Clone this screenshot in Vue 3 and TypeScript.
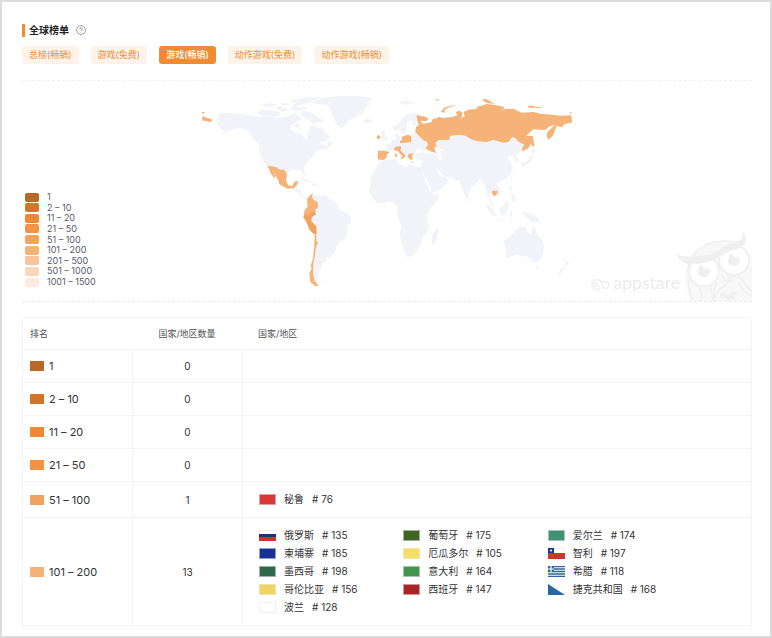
<script setup lang="ts">
import { ref } from 'vue'

interface Country {
  name: string
  rank: number
  color?: string
  flag?: 'ru' | 'cl' | 'gr' | 'cz'
}
interface Band {
  label: string
  color: string
  countries: Country[]
}

const tabs: string[] = ['总榜(畅销)', '游戏(免费)', '游戏(畅销)', '动作游戏(免费)', '动作游戏(畅销)']
const active = ref<number>(2)

const legend: { label: string; color: string }[] = [
  { label: '1', color: '#b96825' },
  { label: '2 – 10', color: '#d37429' },
  { label: '11 – 20', color: '#f08731' },
  { label: '21 – 50', color: '#f39243' },
  { label: '51 – 100', color: '#f2a35d' },
  { label: '101 – 200', color: '#f5b377' },
  { label: '201 – 500', color: '#f7c598' },
  { label: '501 – 1000', color: '#f9d7ba' },
  { label: '1001 – 1500', color: '#fcebde' },
]

const listed: Country[][] = [
  [],
  [],
  [],
  [],
  [{ name: '秘鲁', rank: 76, color: '#d93836' }],
  [
    { name: '俄罗斯', rank: 135, flag: 'ru' },
    { name: '葡萄牙', rank: 175, color: '#3d6524' },
    { name: '爱尔兰', rank: 174, color: '#429172' },
    { name: '柬埔寨', rank: 185, color: '#182f94' },
    { name: '厄瓜多尔', rank: 105, color: '#f5df68' },
    { name: '智利', rank: 197, flag: 'cl' },
    { name: '墨西哥', rank: 198, color: '#2c6849' },
    { name: '意大利', rank: 164, color: '#43944f' },
    { name: '希腊', rank: 118, flag: 'gr' },
    { name: '哥伦比亚', rank: 156, color: '#efd468' },
    { name: '西班牙', rank: 147, color: '#aa2427' },
    { name: '捷克共和国', rank: 168, flag: 'cz' },
    { name: '波兰', rank: 128, color: '#ffffff' },
  ],
]

const bands: Band[] = listed.map((countries, i) => ({ ...legend[i], countries }))
</script>

<template>
  <main class="page">
    <header class="heading">
      <h1>全球榜单</h1>
      <svg class="help" viewBox="0 0 20 20" role="img" aria-label="说明">
        <circle cx="10" cy="10" r="8.8" />
        <path d="M7.2 8.2C7.2 6.5 8.4 5.4 10 5.4s2.8 1 2.8 2.5c0 1.900-2.800 2.100-2.800 4.200M10 13.600v1.500" />
      </svg>
    </header>

    <nav class="tabs">
      <button
        v-for="(tab, i) in tabs"
        :key="tab"
        type="button"
        :class="['tab', { on: i === active }]"
        @click="active = i"
      >{{ tab }}</button>
    </nav>

    <section class="world">
      <svg class="map" viewBox="0 0 1152 600" aria-hidden="true">
        <g class="land">
          <path d="M66 74L80 70 100 68 112 71 130 71 165 76 190 80 215 79 250 84 275 80 290 74 300 66 308 76 320 86 305 96 290 105 287 118 300 128 318 133 326 142 334 150 338 140 336 128 345 118 344 106 362 108 372 116 380 110 388 124 400 132 405 142 395 152 378 156 366 166 382 160 384 168 400 164 410 168 392 178 376 178 362 186 358 196 345 206 340 214 328 228 326 236 331 258 326 260 320 244 312 240 296 240 282 244 275 254 268 244 258 236 247 232 232 230 218 226 206 216 196 200 194 175 190 160 175 146 168 134 150 118 130 114 112 118 100 124 75 136 92 124 80 120 74 110 64 104 72 94 60 90 74 84Z" />
          <path d="M188 66L200 58 222 62 250 62 256 74 240 80 212 78 194 76ZM200 46L225 38 242 42 232 50 210 52ZM243 52L256 48 264 56 276 54 278 62 258 66ZM282 34L310 26 345 20 382 22 362 30 340 38 318 44 300 50 290 46 304 38ZM280 54L300 50 330 52 336 58 306 62ZM320 62L340 64 362 78 380 88 384 100 368 96 352 104 346 92 330 84 318 76ZM296 104L310 100 314 110 302 114ZM256 40L274 38 278 44 262 46ZM358 152L374 152 368 156ZM398 152L412 158 408 168 394 160Z" />
          <path d="M348 38L382 24 430 18 480 17 534 24 520 34 524 44 508 56 510 66 494 76 476 84 458 94 446 110 438 113 424 102 418 88 410 74 408 58 396 46 372 42ZM504 92L514 88 530 89 534 94 520 99 508 97Z" />
          <path d="M296 292L306 296 318 298 321 316 330 322 340 320 334 329 322 324 314 313 298 302ZM312 266L328 265 348 276 338 277 322 269ZM350 280L366 282 364 287 350 285ZM371 285L376 285 376 288 371 288ZM96 278L100 280 98 283Z" />
          <path d="M352 312L362 316 380 318 392 316 402 326 418 336 428 346 430 358 448 366 466 378 469 392 458 408 456 430 450 446 432 458 424 466 424 480 412 494 404 504 390 502 398 512 382 520 378 536 368 544 374 552 366 562 370 586 354 572 352 520 360 430 330 380 340 330ZM388 573L398 571 396 576Z" />
        </g>
        <g class="paid">
          <path d="M22 78L36 84 48 86 52 91 44 97 32 92 22 92ZM21 66L28 66 27 71 22 71Z" />
          <path d="M216 226L228 229 246 232 250 237 262 240 266 238 272 246 276 254 273 272 280 286 292 288 298 275 308 272 309 278 304 288 298 292 296 297 288 294 279 297 266 290 252 281 251 272 238 252 229 232 240 258 239 267 227 250 222 236Z" />
          <path d="M355 309L350 318 356 330 368 336 369 353 363 356 361 370 348 378 326 374 329 360 338 350 336 328 345 316Z" />
          <path d="M359 430L364 434 364 452 369 458 363 472 360 494 355 520 354 550 359 572 371 588 360 588 346 576 343 550 350 535 347 528 354 505 358 468Z" />
        </g>
        <path class="peru" d="M327 374L340 376 347 366 360 366 362 374 350 382 349 394 364 408 365 432 356 432 344 420 334 396 325 382Z" />

        <g transform="translate(495)">
          <g class="land">
            <path d="M58 214L80 210 105 206 112 208 110 220 128 226 140 232 148 222 165 228 182 230 190 252 200 275 212 304 222 314 238 312 232 330 215 350 203 372 202 392 207 410 198 430 186 446 183 462 172 480 158 498 142 502 136 490 128 466 118 436 124 410 116 384 110 370 112 348 104 340 88 334 70 338 52 340 40 328 30 312 27 300 32 284 29 270 38 248 50 232ZM232 412L236 426 228 450 222 464 216 460 215 444 220 428Z" />
            <path d="M162 198L172 190 190 187 205 191 229 192 240 206 246 200 238 192 240 184 248 178 236 178 222 170 222 148 270 144 300 132 330 142 380 152 430 154 455 140 475 150 490 160 484 184 474 190 466 196 475 206 474 218 466 212 460 200 448 198 440 203 448 210 456 222 458 240 450 256 436 268 424 272 416 274 410 282 418 296 420 308 412 318 400 322 390 308 386 312 392 330 404 352 396 348 384 322 376 292 366 274 360 268 348 280 336 290 328 304 326 320 320 328 312 312 304 286 298 270 288 274 280 264 266 262 252 260 266 268 258 284 240 298 215 308 210 296 198 270 186 244 182 230 188 212 170 210Z" />
            <path d="M77 180L82 172 75 164 92 160 94 152 108 146 106 138 114 138 122 142 150 136 164 128 166 112 172 98 188 112 186 134 204 158 196 172 206 178 196 176 184 184 178 172 168 182 162 192 146 194 142 206 130 190 114 176 106 182 90 184ZM96 112L112 104 128 82 145 72 168 68 180 78 168 84 168 102 156 112 162 98 150 90 140 102 140 120 128 134 122 126 118 118 104 124ZM66 122L76 126 74 136 84 144 80 150 64 154 70 146 62 136ZM116 36L136 32 163 36 140 44 124 42ZM230 22L236 26 228 30ZM106 132L114 126 112 142 106 142Z" />
            <path d="M376 338L384 342 398 358 408 376 404 380 386 362ZM418 354L432 344 440 330 446 338 442 362 432 378 420 370ZM404 384L424 388 436 394 418 392ZM450 362L462 356 454 364 460 382 450 378ZM456 306L464 318 468 330 460 336 452 322ZM450 288L458 290 456 304 448 300ZM440 394L462 396 454 400ZM486 362L500 368 514 370 530 380 546 402 530 396 514 396 500 382 488 374ZM326 322L332 328 330 336 326 332ZM452 260L456 258 455 272 452 270ZM412 278L422 274 418 282ZM518 174L528 184 520 192 514 186ZM514 192L520 204 512 216 492 228 484 228 484 220 504 212ZM430 452L452 438 464 422 476 412 492 410 500 412 498 424 514 432 518 408 526 416 534 436 548 454 553 474 546 504 528 519 514 514 500 498 486 500 472 492 452 500 438 504 438 480ZM526 528L536 528 532 540ZM612 504L620 514 629 518 614 532 604 550 592 552 604 536 616 526ZM550 386L560 394 552 390ZM584 416L600 430 588 422ZM628 430L636 428 630 436ZM290 562L298 563 294 566ZM8 94L24 86 38 92 32 98 14 98Z" />
          </g>
          <path class="sea" d="M229 235L240 245 253 259 246 262 236 251ZM185 242L200 266 212 292 214 308 209 302 197 274ZM229 178L241 180 238 192 247 202 241 209 233 202ZM167 187L176 174 186 182 206 183 210 191 188 186 176 190Z" />
          <g class="paid">
            <path d="M170 75L195 80 207 87 199 93 180 92 190 102 215 96 218 87 232 84 236 80 250 84 280 80 292 76 287 67 296 62 306 66 306 80 300 88 314 78 310 66 330 58 348 58 352 50 380 42 400 44 431 50 432 56 420 60 440 57 460 56 485 68 520 66 545 72 575 74 600 77 634 76 636 98 614 102 606 112 590 108 586 118 578 138 564 150 560 138 562 126 572 116 586 104 566 110 556 120 520 118 508 128 498 137 518 138 523 165 518 172 514 160 504 176 486 184 486 176 492 164 474 154 466 144 456 142 446 156 430 158 400 150 380 156 352 154 330 146 318 138 300 134 270 138 268 150 236 150 226 158 230 168 222 174 230 190 212 184 196 176 204 164 200 154 192 152 180 140 166 126 168 112 178 104 172 94Z" />
            <path d="M242 66L252 54 270 47 292 45 270 51 256 58 253 67 266 70ZM364 29L378 27 394 36 404 41 382 40ZM502 49L520 47 528 51 543 51 542 54 506 53ZM222 29L238 28 236 32ZM630 67L635 67 635 71 630 71ZM51 138L56 134 62 140 58 147 51 147ZM53 182L74 182 90 186 82 192 79 204 70 210 53 208ZM119 153L126 150 126 140 142 134 153 138 154 156 136 158 122 160ZM101 176L108 170 122 168 124 176 120 180 134 194 136 200 128 206 119 205 128 200 112 182 104 182ZM105 191L111 191 111 200 106 200ZM143 195L152 190 163 193 154 197 159 206 152 210 144 202ZM151 214L161 216 156 218ZM396 303L402 301 406 304 412 301 412 311 404 318 397 313Z" />
          </g>
        </g>
      </svg>

      <ul class="legend">
        <li v-for="item in legend" :key="item.label">
          <i :style="{ background: item.color }"></i>{{ item.label }}
        </li>
      </ul>

      <svg class="brand" viewBox="54 27 492 216" role="img" aria-label="appstare">
        <path class="body" d="M348 150Q360 82 430 66Q485 56 520 88L546 108V243H362Q344 200 348 150Z" />
        <path class="trim" d="M352 158Q360 84 432 66Q480 58 506 72M354 176Q356 216 368 243M384 198Q398 214 394 243M420 198L432 243M454 166L470 186 488 152M440 186Q428 212 434 243M470 190L498 160 546 216M470 192L446 212 428 243M506 188Q520 220 546 226" />
        <circle class="eye" cx="402" cy="154" r="45" />
        <circle class="eye" cx="492" cy="120" r="45" />
        <path class="mark" d="M320 104Q352 114 400 108Q436 100 462 80Q486 66 508 62Q520 54 520 32Q532 54 524 72Q510 88 484 92Q460 100 436 118Q400 134 356 132Q330 130 320 104Z" />
        <path class="mark" d="M394 136Q402 154 420 146Q420 170 402 172Q384 170 384 154Q384 142 394 136ZM486 100Q492 120 510 112Q512 136 492 138Q472 136 474 118Q476 106 486 100ZM450 222L462 216 472 226 486 216 502 218 490 230 500 238 484 236 474 243 466 234 454 234Z" />
        <path class="glyph" d="M92 204A15 15 0 1 1 92 184Q98 194 98 200A10 10 0 1 0 100 188" />
        <circle class="glyph" cx="78" cy="194" r="5" />
        <text x="130" y="208">appstare</text>
      </svg>
    </section>

    <div class="sheet">
      <table>
        <thead>
          <tr>
            <th class="rank">排名</th>
            <th class="count">国家/地区数量</th>
            <th class="places">国家/地区</th>
          </tr>
        </thead>
        <tbody>
          <tr v-for="band in bands" :key="band.label">
            <td>
              <span class="band"><i :style="{ background: band.color }"></i>{{ band.label }}</span>
            </td>
            <td class="num">{{ band.countries.length }}</td>
            <td class="list">
              <ul v-if="band.countries.length" class="countries">
                <li v-for="c in band.countries" :key="c.name">
                  <svg class="flag" viewBox="0 0 17 11" aria-hidden="true">
                    <rect width="17" height="11" :fill="c.color ?? '#ffffff'" />
                    <rect v-if="c.flag !== 'cz' && c.flag !== 'gr'" class="edge" x=".5" y=".5" width="16" height="10" />
                    <template v-if="c.flag === 'ru'">
                      <path fill="#232c86" d="M0 4h17v3H0z" />
                      <path fill="#d5322e" d="M0 7h17v4H0z" />
                    </template>
                    <template v-else-if="c.flag === 'cl'">
                      <path fill="#c63a2b" d="M0 5h17v6H0z" />
                      <path fill="#1a3798" d="M0 0h6v5H0z" />
                      <circle cx="3" cy="2.500" r="1.100" fill="#fff" />
                    </template>
                    <template v-else-if="c.flag === 'gr'">
                      <path stroke="#2f62b0" stroke-width="1.300" d="M0 .600h17M0 3h17M0 5.500h17M0 8h17M0 10.400h17" />
                      <path fill="#2f62b0" d="M0 0h6v6H0z" />
                      <path stroke="#fff" stroke-width="1.200" d="M3 0v6M0 3h6" />
                    </template>
                    <path v-else-if="c.flag === 'cz'" fill="#2865a3" d="M0 0L17 11H0z" />
                  </svg>
                  <span>{{ c.name }}</span>
                  <span># {{ c.rank }}</span>
                </li>
              </ul>
            </td>
          </tr>
          <tr class="next" aria-hidden="true">
            <td></td>
            <td></td>
            <td></td>
          </tr>
        </tbody>
      </table>
    </div>
  </main>
</template>

<style>
body {
  background: #fff;
}
</style>

<style scoped>
.page {
  box-sizing: border-box;
  min-height: 100vh;
  border: 2px solid #dcdcdc;
  padding: 20px 18px 6px 20px;
  background: #fff;
  color: #333;
  font-family: Inter, 'Noto Sans CJK SC', sans-serif;
  font-size: 10px;
  line-height: 16px;
}
ul {
  list-style: none;
  margin: 0;
  padding: 0;
}
.heading {
  display: flex;
  align-items: center;
  gap: 7px;
}
h1 {
  display: flex;
  align-items: center;
  gap: 4px;
  margin: 0;
  font-size: 10px;
  line-height: 16px;
  font-weight: 700;
  color: #222;
}
h1::before {
  content: '';
  width: 3px;
  height: 13px;
  background: #f28d31;
}
.help {
  width: 10px;
  height: 10px;
  fill: none;
  stroke: #888;
  stroke-width: 1.6;
}
.tabs {
  display: flex;
  flex-wrap: wrap;
  gap: 12px;
  padding: 8px 0 16px;
}
.tab {
  border: 0;
  border-radius: 3px;
  padding: 0 7px;
  background: #fef3e8;
  color: #ee8c36;
  font-family: inherit;
  font-size: 9px;
  line-height: 18px;
  cursor: pointer;
}
.tab.on {
  background: #f08b30;
  color: #fff;
  font-weight: 500;
}
.world {
  position: relative;
  display: flex;
  justify-content: center;
  border-top: 1px dashed #f1f1f1;
  border-bottom: 1px dashed #ebebeb;
  padding: 9px 0 11px;
}
.map {
  width: 52%;
  min-width: 384px;
  max-width: 768px;
}
.land {
  fill: #f2f3f8;
}
.paid {
  fill: #f5b377;
}
.peru {
  fill: #f1a25b;
}
.sea {
  fill: #fff;
}
.legend {
  position: absolute;
  left: 3px;
  bottom: 14px;
  display: flex;
  flex-direction: column;
  justify-content: space-between;
  height: 95px;
  color: #555a6e;
  font-size: 9px;
  line-height: 10px;
}
.legend li {
  display: flex;
  align-items: center;
  gap: 8px;
}
.legend i {
  width: 14px;
  height: 9px;
  border-radius: 2px;
}
.brand {
  position: absolute;
  right: 0;
  bottom: 0;
  width: 164px;
  height: 72px;
}
.body {
  fill: #f8f8f8;
}
.trim {
  fill: none;
  stroke: #f0f0f0;
  stroke-width: 5;
}
.eye {
  fill: #fff;
  stroke: #f0f0f0;
  stroke-width: 6;
}
.mark {
  fill: #efefef;
}
.glyph {
  fill: none;
  stroke: #efefef;
  stroke-width: 5;
}
.brand text {
  fill: #ececec;
  font-family: Lato, sans-serif;
  font-size: 53px;
}
.sheet {
  margin-top: 15px;
  border: 1px solid #f4f4f4;
  border-bottom: 0;
  border-radius: 4px 4px 0 0;
}
table {
  width: 100%;
  border-collapse: separate;
  border-spacing: 0;
  table-layout: fixed;
}
th {
  height: 31px;
  padding: 0 16px;
  color: #555;
  font-size: 9px;
  font-weight: 400;
  text-align: left;
}
th.rank {
  width: 109px;
  padding: 0 7px;
  box-sizing: border-box;
}
th.count {
  width: 110px;
  padding: 0;
  text-align: center;
}
td {
  box-sizing: border-box;
  height: 33px;
  padding: 0 7px;
  border-top: 1px solid #f4f4f4;
}
td + td {
  border-left: 1px solid #f4f4f4;
}
.band {
  display: flex;
  align-items: center;
  gap: 5px;
  font-size: 11px;
}
.band i {
  width: 14px;
  height: 10px;
}
.num {
  text-align: center;
}
.list {
  padding: 0 59px 0 16px;
}
.countries {
  display: grid;
  grid-template-columns: repeat(3, 1fr);
  grid-auto-rows: 18px;
  padding: 8px 0 9px;
}
.countries li {
  display: flex;
  align-items: center;
  gap: 8px;
  white-space: nowrap;
}
.flag {
  width: 17px;
  height: 11px;
}
.edge {
  fill: none;
  stroke: #e8e8e8;
  stroke-opacity: 0.6;
}
.next td {
  height: 4px;
}
</style>
